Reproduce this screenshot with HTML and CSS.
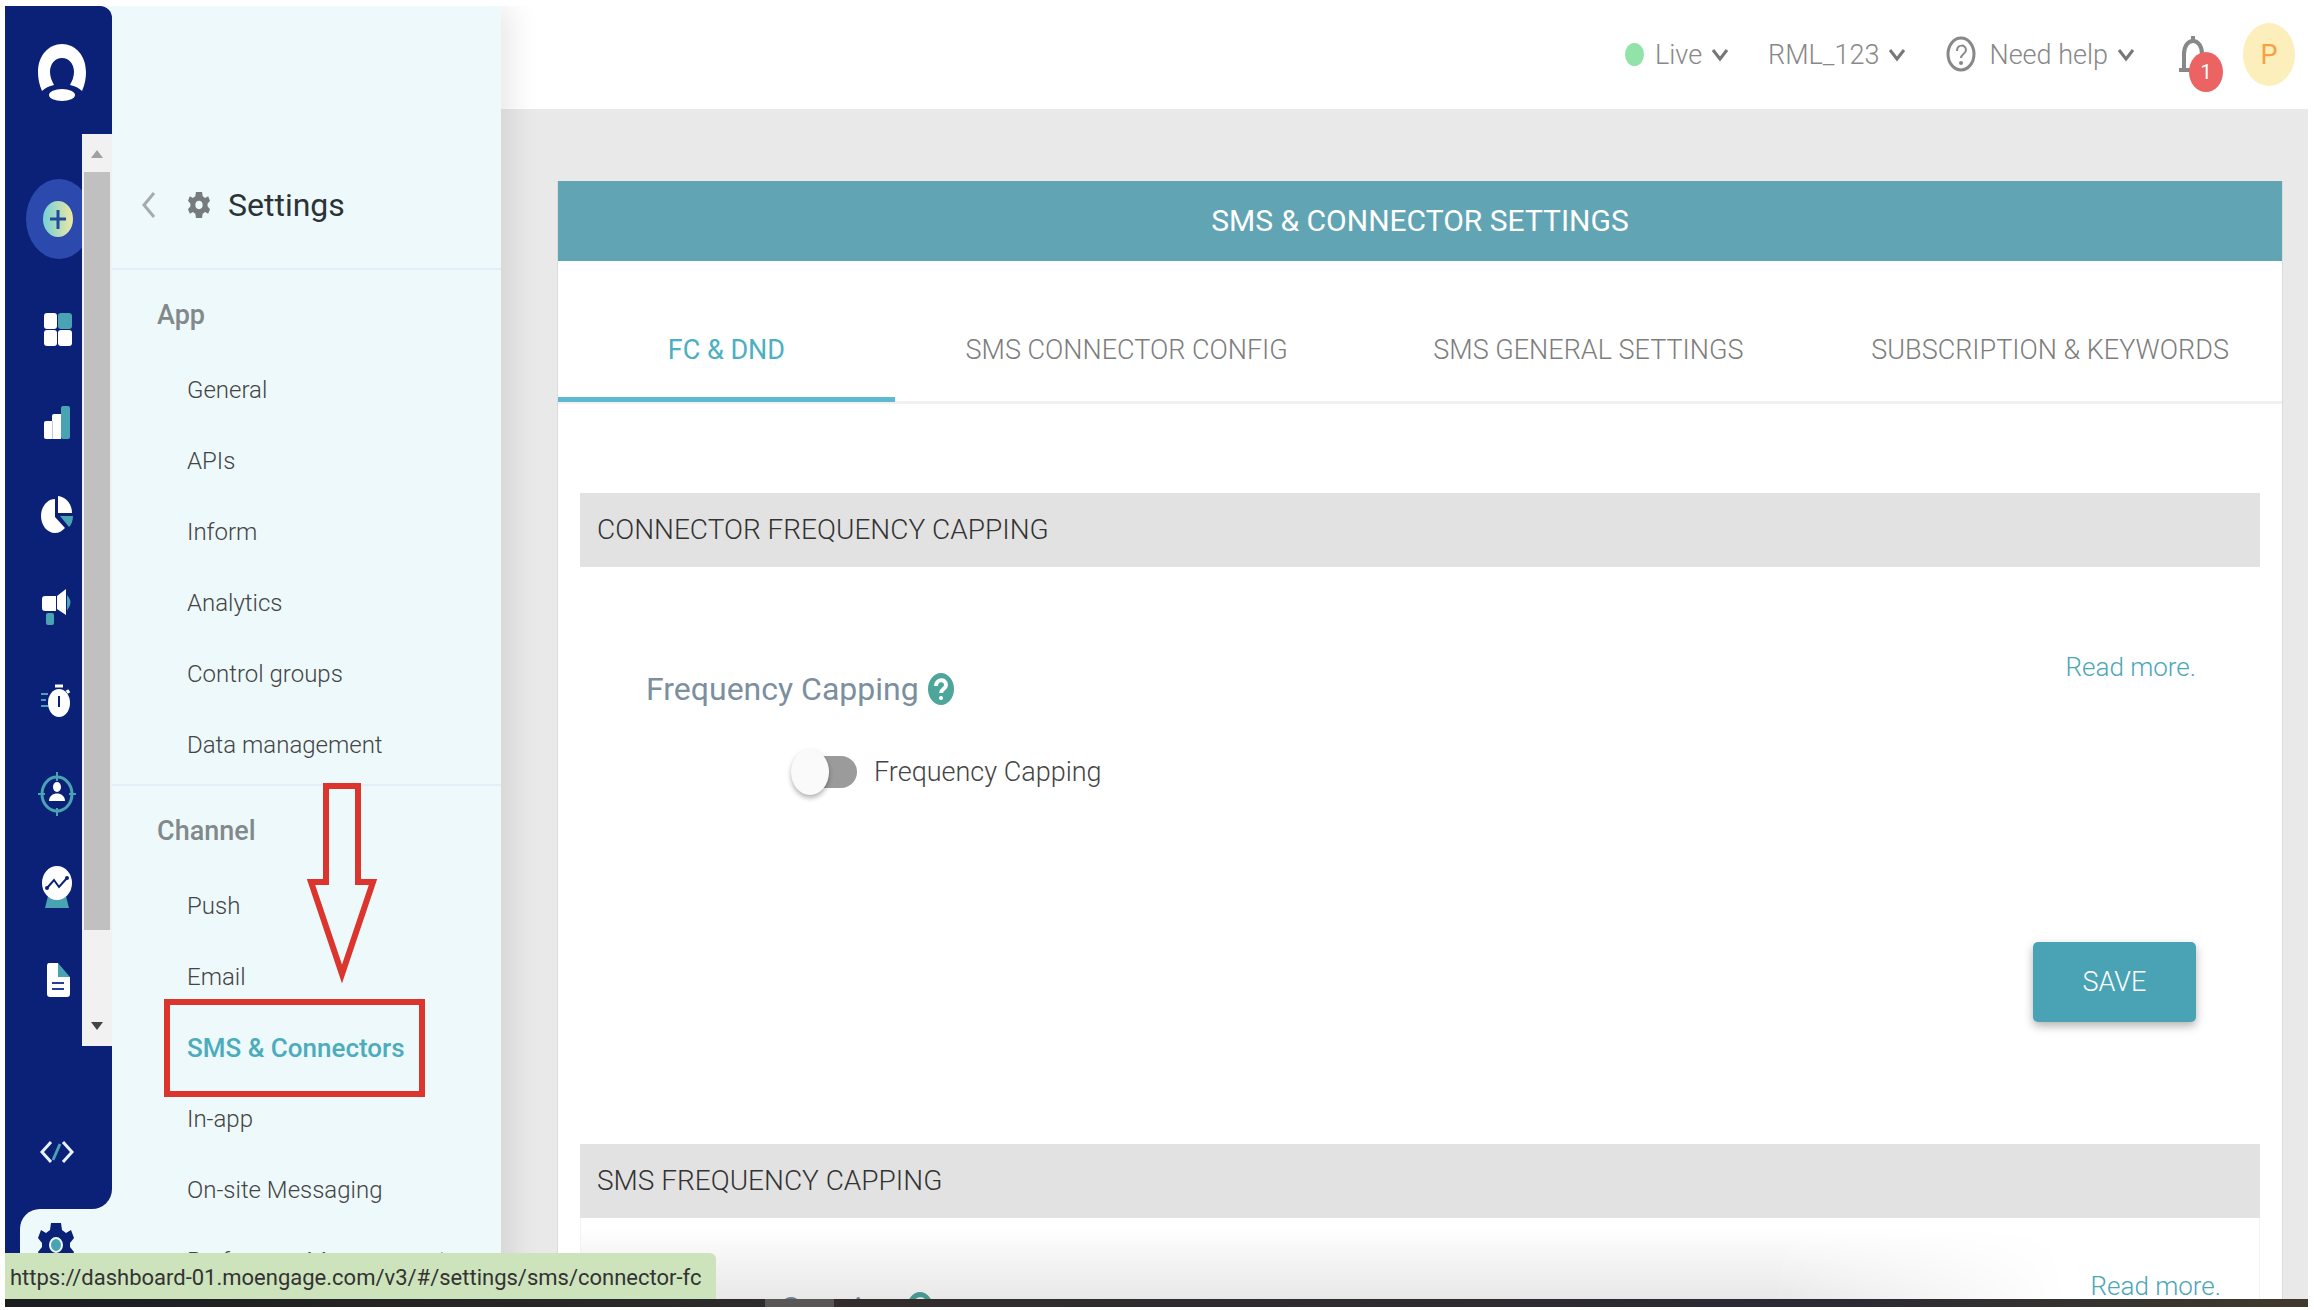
FILE: index.html
```html
<!DOCTYPE html>
<html lang="en">
<head>
<meta charset="utf-8">
<title>SMS &amp; Connector Settings</title>
<link rel="stylesheet" href="styles.css">
</head>
<body>
<div class="window">
  <div class="app">
    <aside class="rail">
      <div class="rail-top">
        <a class="logo" href="#" aria-label="Home">
          <svg width="50" height="60" viewBox="0 0 50 60"><path fill="#fff" d="M5 48C2 41 1 35 1 29 1 12 12 1 25 1s24 11 24 28c0 6-1 12-4 19-3-3-7-5-12-6 2-4 4-8 4-13 0-8-5-14-12-14s-12 6-12 14c0 5 2 9 4 13-5 1-9 3-12 6z"/><ellipse cx="25" cy="52" rx="13" ry="6" fill="#fff"/></svg>
        </a>
        <div class="rail-scroll">
          <nav class="rail-nav" aria-label="Main">
            <a class="add" href="#" aria-label="Create"><svg width="68" height="80" viewBox="0 0 68 80"><defs><linearGradient id="mint" x1="0" x2="1" y1="0" y2="0"><stop offset=".1" stop-color="#7fd3d3"/><stop offset="1" stop-color="#f0e8a0"/></linearGradient></defs><ellipse cx="34" cy="40" rx="33" ry="40" fill="#2c4aae"/><ellipse cx="33" cy="40" rx="15" ry="18" fill="url(#mint)"/><path d="M25 40h16M33 31v19" stroke="#234a9b" stroke-width="3"/></svg></a>
            <a href="#" aria-label="Dashboard"><svg width="38" height="44" viewBox="0 0 38 44"><g fill="#fff"><rect x="6" y="6" width="13" height="16" rx="3"/><rect x="6" y="23" width="13" height="16" rx="3"/><rect x="20" y="23" width="14" height="16" rx="3"/></g><rect x="20" y="6" width="14" height="16" rx="3" fill="#4aa3b3"/></svg></a>
            <a href="#" aria-label="Analytics"><svg width="38" height="44" viewBox="0 0 38 44"><path fill="#fff" d="M6 23q0-2 2-2h6v-5q0-2 2-2h7v25H8q-2 0-2-2z"/><rect x="23" y="6" width="9" height="33" rx="2" fill="#4aa3b3"/><path d="M14.500 21v18" stroke="#c3cbe2"/></svg></a>
            <a href="#" aria-label="Segments"><svg width="38" height="44" viewBox="0 0 38 44"><path fill="#fff" d="M17 6v18l10 11c-3 3-6 5-10 5C9 40 3 32 3 23S9 6 17 6z"/><path fill="#fff" d="M20 3c8 1 14 8 14 17H20z"/><path fill="#4aa3b3" d="M22 23h13c0 5-2 9-4 11z"/></svg></a>
            <a href="#" aria-label="Campaigns"><svg width="38" height="44" viewBox="0 0 38 44"><path fill="#fff" d="M7 10h11v15H7q-3 0-3-3v-9q0-3 3-3zM19 10l9-7v26l-9-6z"/><rect x="8" y="27" width="8" height="12" rx="2" fill="#4aa3b3"/><path d="M30 12q3 4 0 9z" fill="#4aa3b3" stroke="#4aa3b3" stroke-width="2"/></svg></a>
            <a href="#" aria-label="Flows"><svg width="38" height="44" viewBox="0 0 38 44"><ellipse cx="21" cy="24" rx="11" ry="14" fill="#fff"/><path d="M17 7h8M29 11l2 3" stroke="#fff" stroke-width="3"/><path d="M21 17v11" stroke="#0a2177" stroke-width="2"/><path d="M3 15h7M3 21h5M3 27h7" stroke="#4aa3b3" stroke-width="2"/></svg></a>
            <a href="#" aria-label="Personalize"><svg width="38" height="44" viewBox="0 0 38 44"><ellipse cx="19" cy="22" rx="15" ry="17" fill="none" stroke="#4aa3b3" stroke-width="3"/><path d="M19 0v9M19 36v8M0 22h7M31 22h7" stroke="#4aa3b3" stroke-width="2"/><ellipse cx="19" cy="15" rx="4" ry="5" fill="#fff"/><path d="M11 29c0-10 16-10 16 0z" fill="#fff"/></svg></a>
            <a href="#" aria-label="Predictions"><svg width="38" height="44" viewBox="0 0 38 44"><path fill="#4aa3b3" d="M10 31h18l3 12H7z"/><ellipse cx="19" cy="18" rx="15" ry="17" fill="#fff"/><path d="M9 23l7-8 5 7 8-9" fill="none" stroke="#0a2177" stroke-width="2"/><circle cx="9" cy="23" r="2" fill="#0a2177"/><circle cx="29" cy="13" r="2" fill="#0a2177"/></svg></a>
            <a href="#" aria-label="Content"><svg width="38" height="44" viewBox="0 0 38 44"><path fill="#fff" d="M11 5h9v14h12v17q0 3-3 3H12q-3 0-3-3V8q0-3 2-3z"/><path fill="#4aa3b3" d="M20 5l12 14H20z"/><path d="M14 25h12M14 31h12" stroke="#26408f" stroke-width="2"/></svg></a>
          </nav>
          <div class="scrollbar">
            <span class="arrow up"></span><span class="thumb"></span><span class="arrow down"></span>
          </div>
        </div>
        <a class="dev" href="#" aria-label="Developer"><svg width="34" height="22" viewBox="0 0 34 22"><path d="M11 1L2 11l9 10M23 1l9 10-9 10" fill="none" stroke="#e8f2fb" stroke-width="3"/><path d="M20 3l-7 16" stroke="#4aa3b3" stroke-width="3"/></svg></a>
      </div>
      <div class="rail-bottom">
        <a class="rail-active" href="#" aria-label="Settings"><svg width="36" height="44" viewBox="0 0 36 44"><path fill="#0a2177" d="M13 0h10l1 7 4 3 5-3 3 8-4 5v4l4 5-3 8-5-3-4 3-1 7H13l-1-7-4-3-5 3-3-8 4-5v-4l-4-5 3-8 5 3 4-3z"/><ellipse cx="18" cy="22" rx="6" ry="7" fill="#4aa3b3" stroke="#edf9fb" stroke-width="2"/></svg></a>
      </div>
    </aside>

    <aside class="panel">
      <header class="panel-head">
        <a href="#" aria-label="Back"><svg width="14" height="26" viewBox="0 0 14 26"><path d="M12 1L2 13l10 12" fill="none" stroke="#a5abad" stroke-width="3"/></svg></a>
        <svg class="cog" width="22" height="26" viewBox="0 0 36 44" preserveAspectRatio="none"><path fill="#777b7d" fill-rule="evenodd" d="M13 0h10l1 7 4 3 5-3 3 8-4 5v4l4 5-3 8-5-3-4 3-1 7H13l-1-7-4-3-5 3-3-8 4-5v-4l-4-5 3-8 5 3 4-3zM18 15c-4 0-6 3-6 7s2 7 6 7 6-3 6-7-2-7-6-7z"/></svg>
        <h1>Settings</h1>
      </header>
      <section class="group">
        <h2>App</h2>
        <ul>
          <li><a href="#">General</a></li>
          <li><a href="#">APIs</a></li>
          <li><a href="#">Inform</a></li>
          <li><a href="#">Analytics</a></li>
          <li><a href="#">Control groups</a></li>
          <li><a href="#">Data management</a></li>
        </ul>
      </section>
      <section class="group">
        <h2>Channel</h2>
        <ul>
          <li><a href="#">Push</a></li>
          <li><a href="#">Email</a></li>
          <li class="marked"><a class="current" href="#" aria-current="page">SMS &amp; Connectors</a>
            <span class="mark-box"></span>
            <svg class="mark-arrow" width="72" height="202" viewBox="0 0 72 202"><path d="M20 4h32v96h15L36 192 5 100h15z" fill="none" stroke="#dc352d" stroke-width="6"/></svg>
          </li>
          <li><a href="#">In-app</a></li>
          <li><a href="#">On-site Messaging</a></li>
          <li><a href="#">Preference Management</a></li>
        </ul>
      </section>
    </aside>

    <div class="main">
      <header class="topbar">
        <button class="menu live" type="button"><span class="dot"></span>Live<svg class="chev" width="18" height="16" viewBox="0 0 18 16"><path d="M2 3l7 9 7-9" fill="none" stroke="#777" stroke-width="3"/></svg></button>
        <button class="menu account" type="button">RML_123<svg class="chev" width="18" height="16" viewBox="0 0 18 16"><path d="M2 3l7 9 7-9" fill="none" stroke="#777" stroke-width="3"/></svg></button>
        <button class="menu help" type="button"><svg class="q" width="30" height="37" viewBox="0 0 30 37"><ellipse cx="15" cy="18" rx="13" ry="16" fill="none" stroke="#888" stroke-width="3"/><path d="M11 15c0-7 9-7 9-1 0 4-5 4-5 8" fill="none" stroke="#888" stroke-width="2"/><circle cx="15" cy="27" r="2" fill="#888"/></svg>Need help<svg class="chev" width="18" height="16" viewBox="0 0 18 16"><path d="M2 3l7 9 7-9" fill="none" stroke="#777" stroke-width="3"/></svg></button>
        <button class="bell" type="button" aria-label="Notifications"><svg width="28" height="38" viewBox="0 0 28 38"><path d="M5 32V18C5 10 9 5 14 5s9 5 9 13v14M0 34h28M14 5V0" fill="none" stroke="#888" stroke-width="4"/></svg><span class="badge">1</span></button>
        <button class="avatar" type="button">P</button>
      </header>

      <main class="content">
        <div class="card">
          <h2 class="card-title">SMS &amp; CONNECTOR SETTINGS</h2>
          <nav class="tabs">
            <a class="tab active" href="#">FC &amp; DND</a>
            <a class="tab" href="#">SMS CONNECTOR CONFIG</a>
            <a class="tab" href="#">SMS GENERAL SETTINGS</a>
            <a class="tab" href="#">SUBSCRIPTION &amp; KEYWORDS</a>
          </nav>
          <section class="block">
            <h3 class="block-title">CONNECTOR FREQUENCY CAPPING</h3>
            <div class="block-body">
              <div class="block-row">
                <h4>Frequency Capping<svg width="26" height="32" viewBox="0 0 26 32"><ellipse cx="13" cy="16" rx="13" ry="16" fill="#4ea69b"/><path d="M8 13c0-7 10-8 10-1 0 4-5 4-5 8" fill="none" stroke="#fff" stroke-width="4"/><circle cx="13" cy="25" r="2" fill="#fff"/></svg></h4>
                <a class="more" href="#">Read more.</a>
              </div>
              <label class="switch"><input type="checkbox" role="switch">Frequency Capping</label>
              <button class="save" type="button">SAVE</button>
            </div>
          </section>
          <section class="block">
            <h3 class="block-title">SMS FREQUENCY CAPPING</h3>
            <div class="block-body second">
              <div class="block-row">
                <h4>Capping<svg width="26" height="32" viewBox="0 0 26 32"><ellipse cx="13" cy="16" rx="13" ry="16" fill="#4ea69b"/><path d="M8 13c0-7 10-8 10-1 0 4-5 4-5 8" fill="none" stroke="#fff" stroke-width="4"/><circle cx="13" cy="25" r="2" fill="#fff"/></svg></h4>
                <a class="more" href="#">Read more.</a>
              </div>
            </div>
          </section>
        </div>
        <div class="fade"></div>
      </main>
    </div>
    <div class="status">https://dashboard-01.moengage.com/v3/#/settings/sms/connector-fc</div>
  </div>
  <div class="edge"></div>
</div>
</body>
</html>
```

FILE: styles.css
```css
* { box-sizing: border-box; }

body {
  margin: 0;
  background: #fff;
  color: #444;
  font: 300 26px/40px Roboto, "Liberation Sans", sans-serif;
}

h1, h2, h3, h4, ul { margin: 0; padding: 0; font-weight: 300; }
ul { list-style: none; }
a { color: inherit; text-decoration: none; }
button { border: 0; padding: 0; background: none; font: inherit; color: inherit; cursor: pointer; }
svg { display: block; flex: none; }

.window {
  display: flex;
  flex-direction: column;
  height: 100vh;
  padding: 6px 10px 3px 5px;
  overflow: hidden;
}
.app {
  position: relative;
  display: grid;
  grid-template-columns: 107px 389px minmax(0, 1fr);
  grid-template-rows: minmax(0, 1fr);
  flex: 1;
  min-height: 0;
  overflow: hidden;
}
.edge {
  height: 8px;
  flex: none;
  background: linear-gradient(90deg, #1b1d1e, #2d2b2b 33%, #5a5656 33%, #5a5656 36%, #322c2c 36%, #2b2a33 80%, #403a2c);
}

/* icon rail */
.rail { display: flex; flex-direction: column; min-height: 0; background: #edf9fb; }
.rail-top {
  display: flex;
  flex-direction: column;
  flex: 1;
  min-height: 0;
  background: #0a2177;
  border-radius: 0 12px 20px 0;
}
.logo { height: 128px; padding: 37px 0 0 32px; }
.rail-scroll { display: flex; flex: 1; min-height: 0; }
.rail-nav { width: 77px; padding-top: 45px; overflow: hidden; }
.rail-nav a { display: flex; align-items: center; height: 93px; padding-left: 33px; }
.rail-nav .add { height: 80px; margin-bottom: 23px; padding-left: 20px; }
.scrollbar {
  display: flex;
  flex-direction: column;
  align-items: center;
  width: 30px;
  padding: 16px 0;
  background: #f1f1f1;
}
.arrow { border: 6px solid transparent; }
.up { border-top: 0; border-bottom: 8px solid #a0a0a0; }
.down { border-bottom: 0; border-top: 8px solid #444; }
.thumb { width: 26px; flex: 1; margin: 14px 0 92px; background: #c0c0c0; }
.dev { height: 163px; padding: 95px 0 0 35px; }
.rail-bottom { height: 90px; padding-left: 15px; background: #0a2177; }
.rail-active { display: block; height: 90px; padding: 14px 0 0 18px; background: #edf9fb; border-radius: 20px 0 0 0; }

/* settings panel */
.panel {
  z-index: 1;
  min-height: 0;
  background: #edf9fb;
  box-shadow: 8px 0 30px rgba(0, 0, 0, .1);
  clip-path: inset(0 -60px 0 0);
}
.panel-head {
  display: flex;
  align-items: center;
  height: 264px;
  padding: 136px 0 0 30px;
  border-bottom: 2px solid #e3eff8;
}
.panel-head a { margin-right: 32px; }
.cog { margin-right: 18px; }
.panel-head h1 { font-size: 32px; font-weight: 400; color: #2c3336; }
.group { padding: 4px 0 4px 45px; border-bottom: 2px solid #e3eff8; }
.group h2 { height: 80px; line-height: 82px; font-size: 27px; font-weight: 500; color: #83898b; }
.group li { height: 71px; padding-left: 30px; font-size: 24px; line-height: 73px; white-space: nowrap; }
.group .current { font-size: 26px; font-weight: 500; color: #4cacbc; }
.marked { position: relative; }
.mark-box { position: absolute; left: 7px; top: -13px; width: 261px; height: 98px; border: 6px solid #dc352d; }
.mark-arrow { position: absolute; left: 149px; top: -230px; }

/* top bar */
.main { display: flex; flex-direction: column; min-width: 0; min-height: 0; }
.topbar {
  display: flex;
  align-items: center;
  justify-content: flex-end;
  height: 103px;
  flex: none;
  padding: 0 13px 6px 0;
  background: #fff;
  color: #888;
  font-size: 27px;
}
.menu { display: flex; align-items: center; white-space: nowrap; }
.dot { width: 19px; height: 23px; margin-right: 11px; border-radius: 50%; background: #92e3a9; }
.chev { margin-left: 9px; }
.live { margin-right: 39px; }
.account { margin-right: 40px; }
.q { margin-right: 13px; }
.help { margin-right: 44px; }
.bell { position: relative; margin-right: 36px; }
.badge {
  position: absolute;
  left: 10px;
  top: 16px;
  width: 34px;
  height: 40px;
  border-radius: 50%;
  background: #ec6363;
  color: #fff;
  font-size: 20px;
  font-weight: 400;
}
.avatar { width: 52px; height: 63px; border-radius: 50%; background: #fcefbb; color: #f5a145; font-weight: 400; }

/* settings card */
.content {
  position: relative;
  display: flex;
  flex: 1;
  min-height: 0;
  padding: 72px 25px 0 56px;
  background: #e9e9e9;
}
.card { flex: 1; min-width: 0; background: #fff; border: solid #dcdcdc; border-width: 0 1px; overflow: hidden; }
.card-title {
  height: 80px;
  line-height: 80px;
  background: #61a5b5;
  color: #fff;
  font-size: 30px;
  font-weight: 400;
  text-align: center;
}
.tabs {
  display: grid;
  grid-template-columns: 337fr 464fr 460fr 464fr;
  height: 143px;
  margin-bottom: 89px;
  border-bottom: 3px solid #f1f1f1;
  color: #7d7d7d;
  font-size: 27px;
  text-align: center;
}
.tab { height: 141px; padding-top: 69px; white-space: nowrap; }
.active { border-bottom: 5px solid #5dbad0; color: #4cb0c0; font-weight: 400; }
.block { padding: 0 22px; }
.block-title { height: 74px; padding-left: 17px; line-height: 74px; background: #e2e2e2; color: #333; font-size: 28px; }
.block-body { display: flex; flex-direction: column; padding: 80px 64px 122px 66px; }
.second { padding: 48px 38px 48px 199px; border: solid #f3f3f3; border-width: 0 1px; }
.block-row { display: flex; justify-content: space-between; align-items: flex-start; }
.block-row h4 { display: flex; align-items: center; gap: 9px; margin-top: 20px; line-height: 44px; font-size: 32px; color: #7b8f9e; font-weight: 400; }
.more { color: #4ba6b8; }
.switch { display: flex; align-items: center; height: 48px; margin: 37px 0 0 145px; font-size: 27px; }
.switch input {
  appearance: none;
  display: flex;
  align-items: center;
  width: 66px;
  height: 32px;
  margin: 0 17px 0 0;
  border-radius: 16px;
  background: linear-gradient(90deg, transparent 20px, #9b9b9b 20px);
}
.switch input::before {
  content: "";
  flex: none;
  width: 38px;
  height: 46px;
  border-radius: 50%;
  background: #fafafa;
  box-shadow: 0 3px 5px rgba(0, 0, 0, .3);
}
.save {
  align-self: flex-end;
  width: 163px;
  height: 80px;
  margin-top: 146px;
  border-radius: 5px;
  background: #4aa3b5;
  color: #fff;
  font-size: 27px;
  box-shadow: 0 4px 10px rgba(0, 0, 0, .3);
}
.fade {
  position: absolute;
  left: 80px;
  right: 240px;
  bottom: 0;
  height: 72px;
  background: linear-gradient(rgba(0, 0, 0, 0), rgba(0, 0, 0, .09));
  mask-image: linear-gradient(90deg, #000 80%, transparent);
  pointer-events: none;
}

/* link preview */
.status {
  position: absolute;
  z-index: 2;
  left: 0;
  bottom: 0;
  height: 46px;
  padding: 0 14px 0 5px;
  border-radius: 0 6px 0 0;
  background: #cde3bc;
  color: #333;
  font: 400 22px/50px Roboto, "Liberation Sans", sans-serif;
  white-space: nowrap;
}
```
